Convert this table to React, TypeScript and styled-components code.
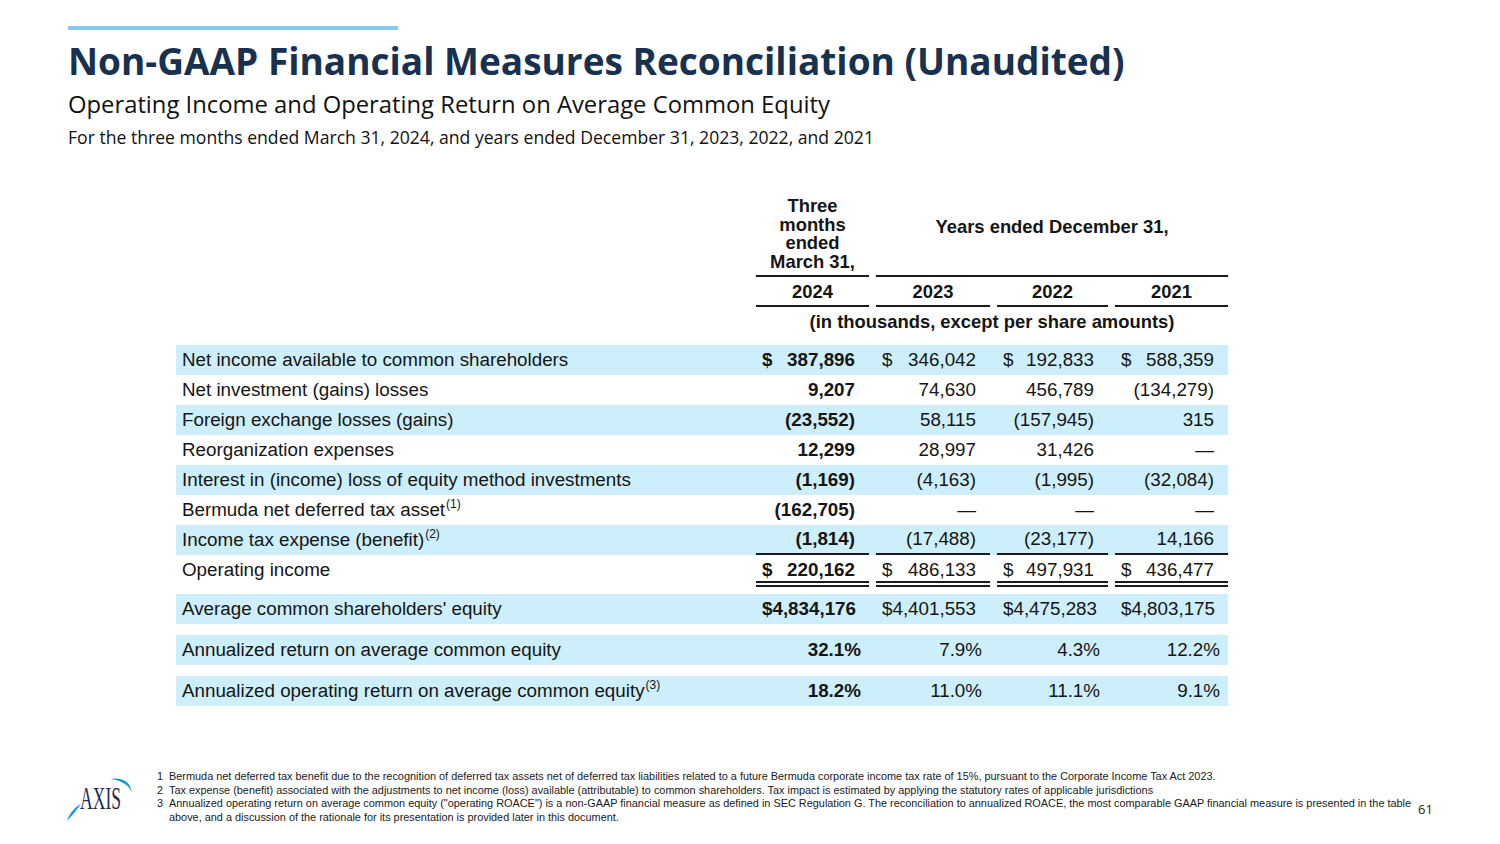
import React from 'react';
import styled, { createGlobalStyle } from 'styled-components';

const Global = createGlobalStyle`
  html, body { margin: 0; padding: 0; background: #ffffff; }
  body { width: 1500px; height: 844px; overflow: hidden; }
`;

const Page = styled.div`
  width: 1500px;
  height: 844px;
  box-sizing: border-box;
  padding-top: 26px;
  display: flex;
  flex-direction: column;
  background: #fff;
`;

const Header = styled.header`
  padding-left: 68px;
  display: flex;
  flex-direction: column;
`;

const AccentBar = styled.div`
  width: 330px;
  height: 4px;
  background: #86cbeb;
`;

const Title = styled.h1`
  margin: 10px 0 0 0;
  font-family: 'Open Sans', 'Noto Sans', sans-serif;
  font-weight: 700;
  font-size: 37px;
  line-height: 42px;
  letter-spacing: 0;
  color: #17314f;
`;

const Subtitle = styled.h2`
  margin: 7px 0 0 0;
  font-family: 'Open Sans', 'Noto Sans', sans-serif;
  font-weight: 400;
  font-size: 23.8px;
  line-height: 30px;
  color: #111;
`;

const Period = styled.p`
  margin: 6px 0 0 0;
  font-family: 'Open Sans', 'Noto Sans', sans-serif;
  font-weight: 400;
  font-size: 17.6px;
  line-height: 24px;
  color: #111;
`;

const TableWrap = styled.section`
  margin: 48px 0 0 176px;
  width: 1052px;
  font-family: 'Liberation Sans', Arial, sans-serif;
  color: #151515;
`;

const cols = '573px 113px 114px 111px 113px';

const HeadGrid = styled.div`
  display: grid;
  grid-template-columns: ${cols};
  column-gap: 7px;
  font-weight: 700;
  font-size: 18.4px;
`;

const ThreeMonths = styled.div`
  grid-column: 2;
  text-align: center;
  line-height: 18.5px;
  padding-bottom: 4px;
  border-bottom: 2px solid #1b1b1b;
`;

const YearsEnded = styled.div`
  grid-column: 3 / span 3;
  display: flex;
  align-items: center;
  justify-content: center;
  padding-bottom: 18px;
  border-bottom: 2px solid #1b1b1b;
`;

const YearCell = styled.div<{ $col: number }>`
  grid-column: ${p => p.$col};
  text-align: center;
  height: 28px;
  line-height: 30px;
  border-bottom: 2px solid #1b1b1b;
`;

const Units = styled.div`
  grid-column: 2 / span 4;
  text-align: center;
  line-height: 30px;
  margin-bottom: 8px;
`;

const Row = styled.div<{ $band: boolean; $gap: number }>`
  display: grid;
  grid-template-columns: ${cols};
  column-gap: 7px;
  height: 30px;
  margin-top: ${p => p.$gap}px;
  background: ${p => (p.$band ? '#cdeefb' : 'transparent')};
  font-size: 18.8px;
`;

const Label = styled.div`
  padding-left: 6px;
  line-height: 30px;
  white-space: nowrap;
`;

const Sup = styled.sup`
  font-size: 12px;
  line-height: 0;
  vertical-align: 8px;
  margin-left: 1px;
`;

type Rule = 'none' | 'single' | 'double';

const Value = styled.div<{ $bold: boolean; $rule: Rule; $pct: boolean }>`
  display: flex;
  align-items: center;
  justify-content: space-between;
  padding: 0 ${p => (p.$pct ? 8 : 14)}px 0 6px;
  font-weight: ${p => (p.$bold ? 700 : 400)};
  white-space: nowrap;
  box-sizing: border-box;
  border-bottom: ${p =>
    p.$rule === 'single' ? '2px solid #1b1b1b' : p.$rule === 'double' ? '6px double #1b1b1b' : 'none'};
  ${p => (p.$rule === 'double' ? 'margin-bottom: -1px; padding-top: 4px;' : '')}
`;

const Dollar = styled.span``;
const Num = styled.span`
  margin-left: auto;
`;

const Footer = styled.footer`
  margin-top: auto;
  padding: 0 0 20px 64px;
  display: flex;
  align-items: flex-end;
`;

const Logo = styled.svg`
  width: 72px;
  height: 52px;
  flex: none;
  overflow: visible;
`;

const Notes = styled.ol`
  list-style: none;
  margin: 0 0 0 21px;
  padding: 0;
  width: 1255px;
  font-family: 'Liberation Sans', Arial, sans-serif;
  font-size: 10.9px;
  line-height: 13.4px;
  color: #1a1a1a;
`;

const Note = styled.li`
  display: grid;
  grid-template-columns: 12px 1fr;
`;

const PageNum = styled.div`
  margin-left: 6px;
  margin-bottom: 6px;
  font-family: 'Open Sans', 'Noto Sans', sans-serif;
  font-size: 13px;
  color: #222;
`;

type RowData = {
  label: string;
  sup?: string;
  vals: string[];
  dollar?: boolean;
  band: boolean;
  rule?: Rule;
  pct?: boolean;
  gap?: number;
};

const rows: RowData[] = [
  { label: 'Net income available to common shareholders', vals: ['387,896', '346,042', '192,833', '588,359'], dollar: true, band: true },
  { label: 'Net investment (gains) losses', vals: ['9,207', '74,630', '456,789', '(134,279)'], band: false },
  { label: 'Foreign exchange losses (gains)', vals: ['(23,552)', '58,115', '(157,945)', '315'], band: true },
  { label: 'Reorganization expenses', vals: ['12,299', '28,997', '31,426', '—'], band: false },
  { label: 'Interest in (income) loss of equity method investments', vals: ['(1,169)', '(4,163)', '(1,995)', '(32,084)'], band: true },
  { label: 'Bermuda net deferred tax asset', sup: '(1)', vals: ['(162,705)', '—', '—', '—'], band: false },
  { label: 'Income tax expense (benefit)', sup: '(2)', vals: ['(1,814)', '(17,488)', '(23,177)', '14,166'], band: true, rule: 'single' },
  { label: 'Operating income', vals: ['220,162', '486,133', '497,931', '436,477'], dollar: true, band: false, rule: 'double' },
  { label: "Average common shareholders' equity", vals: ['$4,834,176', '$4,401,553', '$4,475,283', '$4,803,175'], band: true, gap: 9 },
  { label: 'Annualized return on average common equity', vals: ['32.1%', '7.9%', '4.3%', '12.2%'], band: true, pct: true, gap: 11 },
  { label: 'Annualized operating return on average common equity', sup: '(3)', vals: ['18.2%', '11.0%', '11.1%', '9.1%'], band: true, pct: true, gap: 11 },
];

const notes = [
  'Bermuda net deferred tax benefit due to the recognition of deferred tax assets net of deferred tax liabilities related to a future Bermuda corporate income tax rate of 15%, pursuant to the Corporate Income Tax Act 2023.',
  'Tax expense (benefit) associated with the adjustments to net income (loss) available (attributable) to common shareholders. Tax impact is estimated by applying the statutory rates of applicable jurisdictions',
  'Annualized operating return on average common equity ("operating ROACE") is a non-GAAP financial measure as defined in SEC Regulation G. The reconciliation to annualized ROACE, the most comparable GAAP financial measure is presented in the table above, and a discussion of the rationale for its presentation is provided later in this document.',
];

const AxisLogo = () => (
  <Logo viewBox="0 0 72 52">
    <path d="M3 49 C 5 42, 10 36, 17 32 C 13 37, 9 43, 3 49 Z" fill="#1b9ad8" />
    <path d="M46 7 C 56 5, 66 8, 68 20 C 64 12, 56 8, 46 7 Z" fill="#1b9ad8" />
    <text
      x="16"
      y="37"
      fontFamily="'Liberation Serif', 'DejaVu Serif', serif"
      fontSize="31"
      fill="#1d2f4e"
      textLength="41"
      lengthAdjust="spacingAndGlyphs"
    >
      AXIS
    </text>
  </Logo>
);

export default function App() {
  return (
    <>
      <Global />
      <Page>
        <Header>
          <AccentBar />
          <Title>Non-GAAP Financial Measures Reconciliation (Unaudited)</Title>
          <Subtitle>Operating Income and Operating Return on Average Common Equity</Subtitle>
          <Period>For the three months ended March 31, 2024, and years ended December 31, 2023, 2022, and 2021</Period>
        </Header>

        <TableWrap>
          <HeadGrid>
            <ThreeMonths>
              Three
              <br />
              months
              <br />
              ended
              <br />
              March 31,
            </ThreeMonths>
            <YearsEnded>Years ended December 31,</YearsEnded>
            <YearCell $col={2}>2024</YearCell>
            <YearCell $col={3}>2023</YearCell>
            <YearCell $col={4}>2022</YearCell>
            <YearCell $col={5}>2021</YearCell>
            <Units>(in thousands, except per share amounts)</Units>
          </HeadGrid>

          {rows.map(r => (
            <Row key={r.label} $band={r.band} $gap={r.gap ?? 0}>
              <Label>
                {r.label}
                {r.sup && <Sup>{r.sup}</Sup>}
              </Label>
              {r.vals.map((v, i) => (
                <Value key={i} $bold={i === 0} $rule={r.rule ?? 'none'} $pct={!!r.pct}>
                  {r.dollar && <Dollar>$</Dollar>}
                  <Num>{v}</Num>
                </Value>
              ))}
            </Row>
          ))}
        </TableWrap>

        <Footer>
          <AxisLogo />
          <Notes>
            {notes.map((n, i) => (
              <Note key={i}>
                <span>{i + 1}</span>
                <span>{n}</span>
              </Note>
            ))}
          </Notes>
          <PageNum>61</PageNum>
        </Footer>
      </Page>
    </>
  );
}
